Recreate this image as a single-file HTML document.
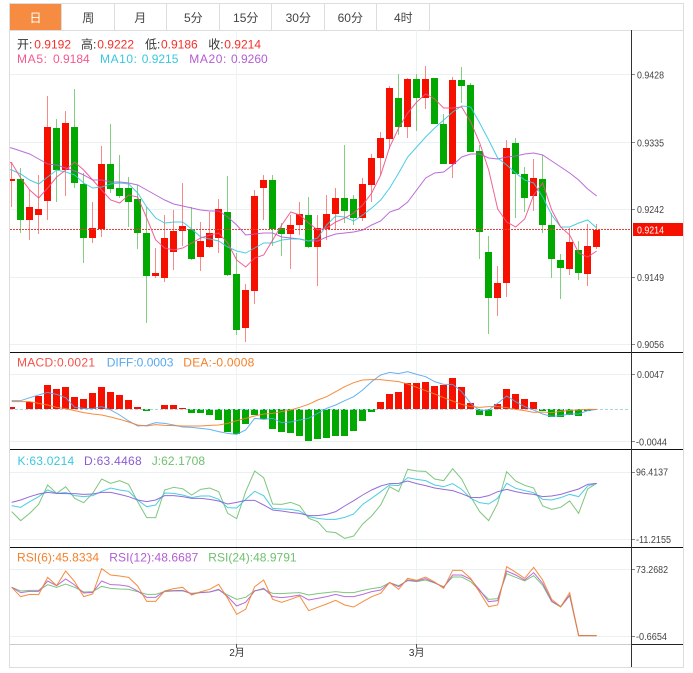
<!DOCTYPE html>
<html><head><meta charset="utf-8"><style>
html,body{margin:0;padding:0;background:#fff}
svg{display:block;font-family:"Liberation Sans","Noto Sans CJK SC",sans-serif}
.n{fill:none;stroke-width:1;vector-effect:non-scaling-stroke;stroke-opacity:.9}
.a{font-size:10px;fill:#444}
.h{font-size:12px}
.t{font-size:12px;fill:#444;text-anchor:middle}
</style></head><body>
<svg width="693" height="673" viewBox="0 0 693 673" xmlns="http://www.w3.org/2000/svg">
<defs><clipPath id="c"><rect x="10" y="30" width="621" height="614"/></clipPath></defs>
<!-- tabs -->
<rect x="10" y="4" width="51.5" height="26" fill="#f58c42"/>
<path d="M61.5 4V30M114.5 4V30M166.5 4V30M219.5 4V30M271.5 4V30M324.5 4V30M376.5 4V30M429.5 4V30" stroke="#ddd" fill="none"/>
<path d="M9.5 3.5H683.5V667.5H9.5ZM10 30.5H683" stroke="#ddd" fill="none"/>
<text x="35.5" y="22" class="t" style="fill:#fff">日</text>
<text x="88.3" y="22" class="t">周</text>
<text x="140.3" y="22" class="t">月</text>
<text x="193.3" y="22" class="t">5分</text>
<text x="245.7" y="22" class="t">15分</text>
<text x="298.3" y="22" class="t">30分</text>
<text x="350.3" y="22" class="t">60分</text>
<text x="403.3" y="22" class="t">4时</text>
<!-- grid -->
<path d="M10 74.5H631M10 142.5H631M10 209.5H631M10 277.5H631M10 344.5H631M10 374.5H631M10 441.5H631M10 472.5H631M10 539.5H631M10 569.5H631M10 636.5H631" stroke="#ebf0f3" fill="none"/>
<path d="M236.5 30V644M416.5 30V644" stroke="#edf2f5" fill="none"/>
<g clip-path="url(#c)">
<!-- wicks -->
<path fill="none" stroke="#f78a86" d="M11.5 162V207M29.5 190V240M38.5 175V234M47.5 96V220M65.5 111V196M92.5 202V243M101.5 146V237M155.5 248V278M164.5 215V282M173.5 210V270M182.5 183V246M200.5 222V271M209.5 212V248M218.5 199V253M245.5 284V342M254.5 190V304M263.5 175V220M290.5 215V269M299.5 202V235M317.5 215V286M326.5 195V240M335.5 188V229M362.5 178V221M371.5 154V202M380.5 132V175M389.5 86V149M407.5 78V138M425.5 66V109M452.5 77V178M497.5 266V316M506.5 140V297M533.5 159V211M569.5 228V275M587.5 224V286M596.5 224V249"/>
<path fill="none" stroke="#80d080" d="M20.5 168V233M56.5 119V202M74.5 89V188M83.5 173V263M110.5 124V193M119.5 155V198M128.5 177V227M137.5 185V249M146.5 207V323M191.5 207V260M227.5 176V276M236.5 253V335M272.5 175V246M281.5 223V256M308.5 197V248M344.5 145V223M353.5 195V225M398.5 74V135M416.5 74V131M443.5 114V164M461.5 67V103M470.5 83V152M479.5 145V259M488.5 236V334M515.5 138V218M524.5 167V212M542.5 155V233M551.5 213V278M560.5 254V299M578.5 241V280"/>
<!-- bodies -->
<path fill="#f51000" d="M8 179h7v2h-7zM26 207h7v13h-7zM35 209h7v6h-7zM44 127h7v74h-7zM62 123h7v47h-7zM89 228h7v10h-7zM98 164h7v65h-7zM152 273h7v3h-7zM161 238h7v40h-7zM170 231h7v21h-7zM179 226h7v5h-7zM197 241h7v16h-7zM206 233h7v14h-7zM215 209h7v29h-7zM242 290h7v38h-7zM251 196h7v95h-7zM260 180h7v8h-7zM287 225h7v9h-7zM296 214h7v11h-7zM314 228h7v19h-7zM323 214h7v15h-7zM332 198h7v16h-7zM359 184h7v34h-7zM368 158h7v27h-7zM377 138h7v20h-7zM386 88h7v51h-7zM404 79h7v48h-7zM422 79h7v19h-7zM449 80h7v84h-7zM494 283h7v15h-7zM503 148h7v135h-7zM530 178h7v18h-7zM566 242h7v27h-7zM584 246h7v28h-7zM593 230h7v17h-7z"/>
<path fill="#00a800" d="M17 179h7v41h-7zM53 128h7v42h-7zM71 127h7v56h-7zM80 184h7v54h-7zM107 164h7v25h-7zM116 188h7v8h-7zM125 188h7v14h-7zM134 199h7v34h-7zM143 233h7v43h-7zM188 229h7v30h-7zM224 212h7v63h-7zM233 274h7v56h-7zM269 180h7v49h-7zM278 228h7v6h-7zM305 215h7v32h-7zM341 198h7v13h-7zM350 199h7v19h-7zM395 98h7v29h-7zM413 79h7v19h-7zM431 78h7v46h-7zM440 124h7v40h-7zM458 80h7v6h-7zM467 85h7v67h-7zM476 151h7v81h-7zM485 252h7v46h-7zM512 143h7v31h-7zM521 174h7v24h-7zM539 179h7v46h-7zM548 225h7v34h-7zM557 260h7v8h-7zM575 250h7v23h-7z"/>
<!-- price line -->
<path d="M10 229.5H631" stroke="#e8403a" stroke-dasharray="2 1" fill="none"/>
<!-- MAs -->
<polyline class="n" stroke="#b45cd4" points="2.7,146 11.7,148 20.7,151 29.7,154 38.7,159 47.7,164 56.7,165 65.7,168 74.7,171 83.7,175 92.7,180 101.7,180 110.7,182 119.7,182 128.7,183 137.7,185 146.7,190 155.7,195 164.7,200 173.7,204 182.7,206 191.7,208 200.7,210 209.7,211 218.7,211 227.7,217 236.7,225 245.7,235 254.7,234 263.7,233 272.7,233 281.7,237 290.7,238 299.7,239 308.7,241 317.7,241 326.7,237 335.7,234 344.7,233 353.7,232 362.7,230 371.7,225 380.7,221 389.7,212 398.7,209 407.7,202 416.7,190 425.7,178 434.7,173 443.7,172 452.7,165 461.7,157 470.7,154 479.7,154 488.7,158 497.7,159 506.7,157 515.7,156 524.7,154 533.7,153 542.7,155 551.7,161 560.7,167 569.7,173 578.7,180 587.7,189 596.7,196"/>
<polyline class="n" stroke="#38c8e0" points="2.7,168 11.7,170 20.7,174 29.7,180 38.7,184 47.7,177 56.7,170 65.7,172 74.7,175 83.7,183 92.7,188 101.7,187 110.7,184 119.7,183 128.7,184 137.7,193 146.7,207 155.7,218 164.7,223 173.7,222 182.7,222 191.7,229 200.7,237 209.7,239 218.7,241 227.7,247 236.7,251 245.7,253 254.7,248 263.7,243 272.7,243 281.7,240 290.7,239 299.7,239 308.7,241 317.7,238 326.7,225 335.7,216 344.7,217 353.7,221 362.7,215 371.7,208 380.7,200 389.7,188 398.7,173 407.7,157 416.7,147 425.7,137 434.7,128 443.7,120 452.7,112 461.7,106 470.7,107 479.7,123 488.7,140 497.7,158 506.7,165 515.7,173 524.7,180 533.7,183 542.7,197 551.7,215 560.7,227 569.7,227 578.7,223 587.7,220 596.7,228"/>
<polyline class="n" stroke="#f0508c" points="2.7,160 11.7,163 20.7,178 29.7,190 38.7,198 47.7,188 56.7,177 65.7,170 74.7,162 83.7,170 92.7,180 101.7,190 110.7,200 119.7,203 128.7,195 137.7,197 146.7,218 155.7,240 164.7,248 173.7,250 182.7,248 191.7,243 200.7,238 209.7,235 218.7,233 227.7,243 236.7,260 245.7,267 254.7,258 263.7,255 272.7,240 281.7,225 290.7,212 299.7,215 308.7,223 317.7,230 326.7,228 335.7,222 344.7,218 353.7,213 362.7,205 371.7,193 380.7,175 389.7,147 398.7,128 407.7,113 416.7,102 425.7,94 434.7,99 443.7,108 452.7,108 461.7,107 470.7,122 479.7,143 488.7,170 497.7,209 506.7,222 515.7,227 524.7,219 533.7,195 542.7,183 551.7,210 560.7,227 569.7,235 578.7,253 587.7,257 596.7,251"/>
<!-- MACD bars -->
<path fill="#f51000" d="M8 407h7v2h-7zM26 402h7v7h-7zM35 396h7v13h-7zM44 385h7v24h-7zM53 389h7v20h-7zM62 387h7v22h-7zM71 397h7v12h-7zM80 399h7v10h-7zM89 393h7v16h-7zM98 387h7v22h-7zM107 392h7v17h-7zM116 395h7v14h-7zM125 400h7v9h-7zM134 407h7v2h-7zM161 405h7v4h-7zM170 405h7v4h-7zM179 408h7v1h-7zM377 402h7v7h-7zM386 394h7v15h-7zM395 392h7v17h-7zM404 383h7v26h-7zM413 383h7v26h-7zM422 382h7v27h-7zM431 386h7v23h-7zM440 385h7v24h-7zM449 378h7v31h-7zM458 387h7v22h-7zM467 403h7v6h-7zM494 404h7v5h-7zM503 389h7v20h-7zM512 394h7v15h-7zM521 399h7v10h-7zM530 402h7v7h-7z"/>
<path fill="#00a800" d="M143 409h7v2h-7zM188 409h7v4h-7zM197 409h7v4h-7zM206 409h7v6h-7zM215 409h7v11h-7zM224 409h7v23h-7zM233 409h7v25h-7zM242 409h7v15h-7zM251 409h7v6h-7zM260 409h7v10h-7zM269 409h7v20h-7zM278 409h7v23h-7zM287 409h7v24h-7zM296 409h7v27h-7zM305 409h7v32h-7zM314 409h7v30h-7zM323 409h7v29h-7zM332 409h7v27h-7zM341 409h7v27h-7zM350 409h7v22h-7zM359 409h7v12h-7zM368 409h7v3h-7zM476 409h7v6h-7zM485 409h7v7h-7zM539 409h7v2h-7zM548 409h7v8h-7zM557 409h7v8h-7zM566 409h7v6h-7zM575 409h7v7h-7zM584 409h7v2h-7z"/>
<path d="M10 409.5H630" stroke="#a8d4e8" stroke-dasharray="3 2" fill="none"/>
<!-- MACD lines -->
<g transform="translate(0,350) scale(.33333)" fill="none" stroke-width="1">
<polyline class="n" stroke="#55a8f0" points="35,152 62,152 89,143 116,135 143,127 170,133 197,143 224,172 251,175 278,176 305,170 332,180 359,195 386,213 413,228 440,226 467,218 494,220 521,225 548,231 575,232 602,235 629,238 656,245 683,250 710,253 737,240 764,205 791,208 818,205 845,218 872,216 899,210 926,205 953,190 980,175 1007,165 1034,152 1061,140 1088,120 1115,95 1142,75 1169,67 1196,71 1223,65 1250,73 1277,80 1304,95 1331,103 1358,103 1385,125 1412,160 1439,182 1466,180 1493,160 1520,138 1547,155 1574,170 1601,180 1628,192 1655,199 1682,197 1709,192 1736,192 1763,182 1790,178"/>
<polyline class="n" stroke="#f5802a" points="35,155 62,155 89,155 116,160 143,165 170,172 197,176 224,182 251,188 278,192 305,195 332,201 359,208 386,216 413,225 440,228 467,224 494,226 521,227 548,228 575,228 602,228 629,226 656,225 683,220 710,212 737,205 764,198 791,192 818,190 845,185 872,180 899,172 926,163 953,150 980,140 1007,125 1034,110 1061,98 1088,90 1115,89 1142,89 1169,92 1196,95 1223,102 1250,112 1277,122 1304,132 1331,143 1358,153 1385,163 1412,170 1439,172 1466,170 1493,170 1520,173 1547,178 1574,182 1601,187 1628,186 1655,188 1682,184 1709,181 1736,180 1763,178 1790,178"/>
</g>
<!-- KDJ -->
<g transform="translate(0,450) scale(.33333)" fill="none" stroke-width="1">
<polyline class="n" stroke="#70c070" points="35,185 62,212 89,190 116,163 143,105 170,130 197,110 224,145 251,158 278,130 305,87 332,100 359,92 386,103 413,155 440,203 467,203 494,120 521,112 548,116 575,135 602,118 629,114 656,125 683,190 710,206 737,125 764,63 791,83 818,162 845,163 872,157 899,167 926,205 953,215 980,245 1007,248 1034,265 1061,258 1088,222 1115,198 1142,165 1169,110 1196,125 1223,58 1250,63 1277,64 1304,87 1331,92 1358,56 1385,87 1412,140 1439,185 1466,212 1493,160 1520,65 1547,93 1574,106 1601,114 1628,168 1655,178 1682,172 1709,153 1736,190 1763,117 1790,100"/>
<polyline class="n" stroke="#38c8e0" points="35,167 62,172 89,155 116,140 143,120 170,130 197,127 224,137 251,140 278,137 305,124 332,114 359,120 386,124 413,150 440,170 467,165 494,129 521,130 548,135 575,143 602,138 629,138 656,148 683,173 710,174 737,148 764,124 791,137 818,175 845,177 872,178 899,183 926,200 953,205 980,208 1007,208 1034,202 1061,192 1088,163 1115,145 1142,125 1169,105 1196,107 1223,83 1250,88 1277,92 1304,105 1331,110 1358,101 1385,118 1412,145 1439,158 1466,162 1493,145 1520,100 1547,115 1574,122 1601,128 1628,148 1655,150 1682,143 1709,133 1736,140 1763,108 1790,100"/>
<polyline class="n" stroke="#8a5cd4" points="35,157 62,150 89,140 116,132 143,127 170,130 197,131 224,131 251,133 278,132 305,127 332,127 359,133 386,140 413,150 440,155 467,150 494,137 521,137 548,140 575,145 602,145 629,148 656,153 683,162 710,157 737,151 764,151 791,165 818,180 845,183 872,187 899,190 926,197 953,197 980,193 1007,185 1034,168 1061,152 1088,135 1115,120 1142,108 1169,101 1196,100 1223,93 1250,101 1277,107 1304,114 1331,118 1358,122 1385,131 1412,142 1439,143 1466,137 1493,125 1520,118 1547,125 1574,130 1601,133 1628,140 1655,138 1682,133 1709,125 1736,117 1763,103 1790,100"/>
</g>
<!-- RSI -->
<g transform="translate(0,545) scale(.33333)" fill="none" stroke-width="1">
<polyline class="n" stroke="#70c070" points="35,127 62,138 89,136 116,136 143,119 170,127 197,117 224,127 251,141 278,140 305,124 332,130 359,132 386,133 413,140 440,148 467,148 494,140 521,138 548,138 575,145 602,142 629,141 656,135 683,150 710,163 737,157 764,137 791,133 818,145 845,146 872,144 899,143 926,150 953,146 980,143 1007,140 1034,143 1061,143 1088,136 1115,131 1142,127 1169,113 1196,122 1223,107 1250,110 1277,105 1304,114 1331,125 1358,96 1385,96 1412,110 1439,137 1466,163 1493,161 1520,86 1547,97 1574,108 1601,92 1628,121 1655,170 1682,186 1709,152 1736,272 1763,272 1790,272"/>
<polyline class="n" stroke="#b45cd4" points="35,127 62,143 89,139 116,139 143,108 170,122 197,102 224,120 251,144 278,142 305,108 332,119 359,120 386,124 413,138 440,157 467,157 494,138 521,137 548,136 575,147 602,143 629,141 656,133 683,155 710,183 737,172 764,138 791,130 818,155 845,158 872,155 899,150 926,165 953,160 980,155 1007,148 1034,155 1061,155 1088,148 1115,140 1142,135 1169,113 1196,125 1223,105 1250,108 1277,101 1304,113 1331,127 1358,90 1385,90 1412,103 1439,135 1466,170 1493,167 1520,78 1547,90 1574,105 1601,83 1628,115 1655,168 1682,185 1709,150 1736,272 1763,272 1790,272"/>
<polyline class="n" stroke="#f5802a" points="35,127 62,155 89,148 116,149 143,97 170,122 197,78 224,110 251,155 278,147 305,71 332,90 359,93 386,97 413,123 440,169 467,169 494,138 521,131 548,127 575,150 602,140 629,133 656,118 683,160 710,208 737,193 764,125 791,105 818,163 845,172 872,163 899,153 926,197 953,187 980,177 1007,166 1034,180 1061,186 1088,170 1115,155 1142,145 1169,112 1196,133 1223,100 1250,106 1277,96 1304,111 1331,130 1358,76 1385,76 1412,100 1439,142 1466,185 1493,180 1520,65 1547,82 1574,100 1601,67 1628,105 1655,163 1682,185 1709,143 1736,272 1763,272 1790,272"/>
</g>
</g>
<!-- separators -->
<path d="M10 352.5H683M10 449.5H683M10 547.5H683" stroke="#111" fill="none"/>
<path d="M10 644.5H631" stroke="#ccc" fill="none"/>
<path d="M631 644.5H683" stroke="#222" fill="none"/>
<path d="M631.5 30V667" stroke="#333" fill="none"/>
<!-- ticks -->
<path d="M632 74.5h3M632 142.5h3M632 209.5h3M632 277.5h3M632 344.5h3M632 374.5h3M632 441.5h3M632 472.5h3M632 539.5h3M632 569.5h3M632 636.5h3" stroke="#888" fill="none"/>
<path d="M236.5 644v4M416.5 644v4" stroke="#555" fill="none"/>
<!-- axis labels -->
<text class="a" x="637" y="78.5" textLength="27" lengthAdjust="spacingAndGlyphs">0.9428</text>
<text class="a" x="637" y="146.5" textLength="27" lengthAdjust="spacingAndGlyphs">0.9335</text>
<text class="a" x="637" y="213" textLength="27" lengthAdjust="spacingAndGlyphs">0.9242</text>
<text class="a" x="637" y="281" textLength="27" lengthAdjust="spacingAndGlyphs">0.9149</text>
<text class="a" x="637" y="348" textLength="27" lengthAdjust="spacingAndGlyphs">0.9056</text>
<text class="a" x="637" y="378" textLength="27" lengthAdjust="spacingAndGlyphs">0.0047</text>
<text class="a" x="636" y="445.5" textLength="31" lengthAdjust="spacingAndGlyphs">-0.0044</text>
<text class="a" x="636" y="475.5" textLength="32" lengthAdjust="spacingAndGlyphs">96.4137</text>
<text class="a" x="636" y="543" textLength="35" lengthAdjust="spacingAndGlyphs">-11.2155</text>
<text class="a" x="636" y="573" textLength="32" lengthAdjust="spacingAndGlyphs">73.2682</text>
<text class="a" x="636" y="640" textLength="31" lengthAdjust="spacingAndGlyphs">-0.6654</text>
<rect x="633" y="223" width="50" height="13" fill="#f51000"/>
<text class="a" style="fill:#fff" x="637" y="233.5" textLength="27" lengthAdjust="spacingAndGlyphs">0.9214</text>
<text class="a" x="237" y="656" text-anchor="middle" style="fill:#333">2月</text>
<text class="a" x="416.7" y="656" text-anchor="middle" style="fill:#333">3月</text>
<!-- legends -->
<g class="h">
<text x="17" y="48.5" fill="#333">开:</text><text x="34.3" y="48.5" fill="#f5302a">0.9192</text>
<text x="81" y="48.5" fill="#333">高:</text><text x="97.3" y="48.5" fill="#f5302a">0.9222</text>
<text x="145" y="48.5" fill="#333">低:</text><text x="161" y="48.5" fill="#f5302a">0.9186</text>
<text x="208.3" y="48.5" fill="#333">收:</text><text x="224.3" y="48.5" fill="#f5302a">0.9214</text>
<text x="17" y="63" fill="#f5588c" textLength="30">MA5:</text><text x="53" y="63" fill="#f5588c">0.9184</text>
<text x="100" y="63" fill="#38c8e0" textLength="37">MA10:</text><text x="141.7" y="63" fill="#38c8e0">0.9215</text>
<text x="189.3" y="63" fill="#b45cd4" textLength="37">MA20:</text><text x="231" y="63" fill="#b45cd4">0.9260</text>
<text x="17" y="366.5" fill="#f5504a" textLength="78">MACD:0.0021</text>
<text x="106.7" y="366.5" fill="#55a8f0" textLength="66.7">DIFF:0.0003</text>
<text x="183.3" y="366.5" fill="#f5802a" textLength="71">DEA:-0.0008</text>
<text x="17.5" y="465" fill="#38c8e0" textLength="56.7">K:63.0214</text>
<text x="84" y="465" fill="#8a5cd4" textLength="57.7">D:63.4468</text>
<text x="151.7" y="465" fill="#70c070" textLength="53.3">J:62.1708</text>
<text x="17" y="561.5" fill="#f5802a" textLength="82">RSI(6):45.8334</text>
<text x="109.3" y="561.5" fill="#b45cd4" textLength="89">RSI(12):48.6687</text>
<text x="208.3" y="561.5" fill="#70c070" textLength="88.3">RSI(24):48.9791</text>
</g>
</svg>
</body></html>
